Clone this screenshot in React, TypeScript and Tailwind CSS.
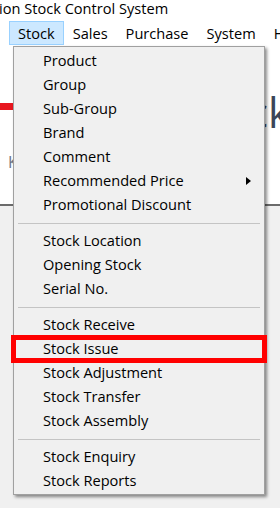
const menuBar = ["Stock", "Sales", "Purchase", "System", "Help"];

type Entry = { label: string; sub?: boolean; marked?: boolean } | "sep";

const stockMenu: Entry[] = [
  { label: "Product" },
  { label: "Group" },
  { label: "Sub-Group" },
  { label: "Brand" },
  { label: "Comment" },
  { label: "Recommended Price", sub: true },
  { label: "Promotional Discount" },
  "sep",
  { label: "Stock Location" },
  { label: "Opening Stock" },
  { label: "Serial No." },
  "sep",
  { label: "Stock Receive" },
  { label: "Stock Issue", marked: true },
  { label: "Stock Adjustment" },
  { label: "Stock Transfer" },
  { label: "Stock Assembly" },
  "sep",
  { label: "Stock Enquiry" },
  { label: "Stock Reports" },
];

export default function App() {
  return (
    <div
      className="relative w-[280px] h-[508px] overflow-hidden bg-white text-[14.6px] text-black flex flex-col"
      style={{ fontFamily: '"Open Sans", "Noto Sans", sans-serif' }}
    >
      {/* Title bar */}
      <div className="h-[21px] shrink-0 whitespace-nowrap leading-[16px] ml-[-1px]">
        ion Stock Control System
      </div>

      {/* Menu bar */}
      <div className="h-[24px] shrink-0 flex whitespace-nowrap">
        <div className="w-[13px] overflow-hidden flex justify-end items-center pr-[9px] text-[#c9d3dc]">s</div>
        {menuBar.map((m) => (
          <div
            key={m}
            className={
              m === "Stock"
                ? "h-full flex items-center pt-[1px] px-[8px] border border-[#99d1ff] bg-[#cce8ff]"
                : "h-full flex items-center pt-[1px] px-[9px]"
            }
          >
            {m}
          </div>
        ))}
      </div>

      {/* Window content behind the menu */}
      <div className="h-[159px] shrink-0 bg-white flex flex-col">
        <div className="flex justify-between items-start">
          <div className="w-[60px] h-[7px] mt-[58px] bg-[#e8171f]" />
          <div className="text-[42px] leading-none mt-[46px] mr-[-10px] text-[#3b4658]">Stock</div>
        </div>
        <div className="pl-[8px] mt-[21px] text-[16px] leading-none text-[#6b7385]">K</div>
      </div>
      <div className="h-[2px] shrink-0 bg-[#6b6b6b]" />
      <div className="flex-1 bg-[#f0f0f0]" />

      {/* Dropdown */}
      <div className="absolute left-[13px] top-[46px] w-[252px] border border-[#a0a0a0] bg-[#f0f0f0] pt-[2px] pb-[1px] shadow-[2px_2px_3px_rgba(0,0,0,0.45)]">
        {stockMenu.map((e, i) =>
          e === "sep" ? (
            <div key={i} className="h-[12px] flex items-center pl-[4px] pr-[4px]">
              <div className="h-px w-full bg-[#c4c4c4]" />
            </div>
          ) : (
            <div key={i} className="relative h-[24px] flex items-center pl-[29px] whitespace-nowrap">
              {e.label}
              {e.sub && (
                <svg className="absolute right-[13px] top-[8px]" width="5" height="8" viewBox="0 0 5 8">
                  <polygon points="0,0 5,4 0,8" fill="#000" />
                </svg>
              )}
              {e.marked && (
                <div className="absolute left-[-3px] right-[-3px] top-[-2px] bottom-[-2px] border-[5px] border-[#ff0000]" />
              )}
            </div>
          )
        )}
      </div>
    </div>
  );
}
